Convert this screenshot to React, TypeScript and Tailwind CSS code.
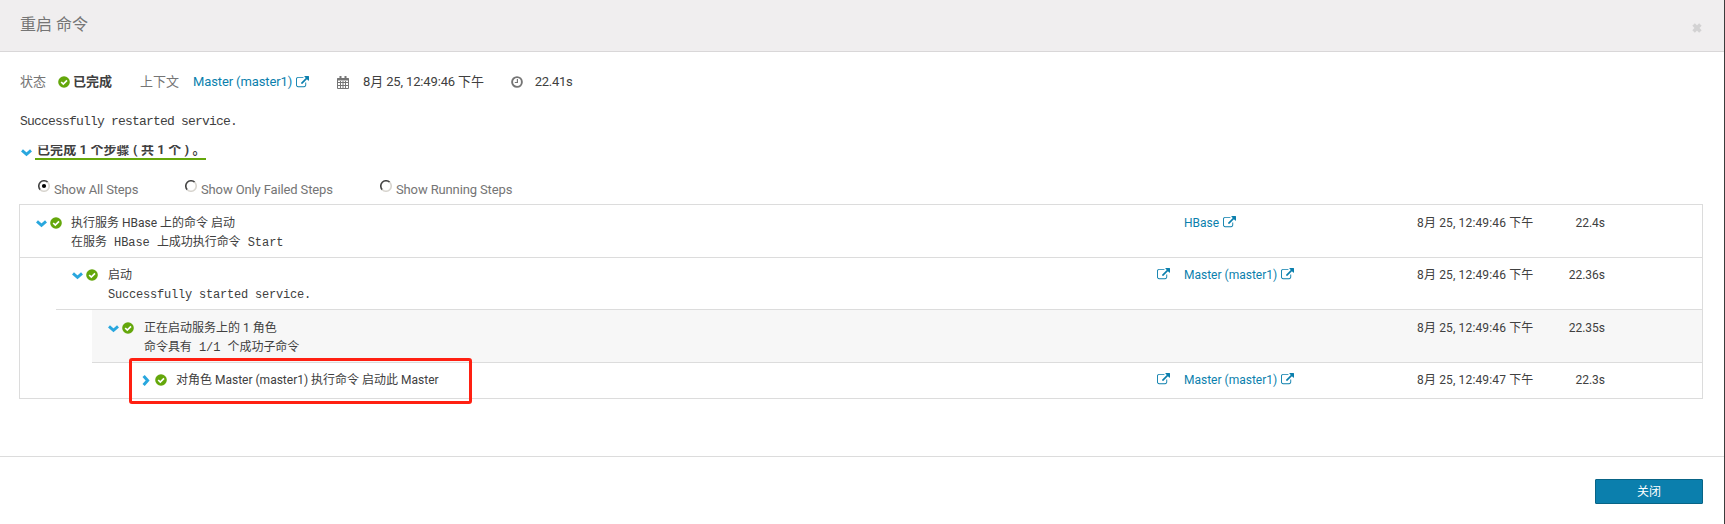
import React from "react";

const sans = "font-[Roboto,'Noto_Sans_CJK_SC',sans-serif]";
const mono = "font-['Liberation_Mono','Noto_Sans_CJK_SC',monospace]";

function Check({ className = "" }: { className?: string }) {
  return (
    <svg viewBox="0 0 12 12" className={`size-3 shrink-0 ${className}`}>
      <circle cx="6" cy="6" r="5.8" fill="#64a70b" />
      <path d="M3.2 6l2.1 2.1L9 4.4" fill="none" stroke="#fff" strokeWidth="1.7" />
    </svg>
  );
}

function Chevron({ open = true, className = "" }: { open?: boolean; className?: string }) {
  return open ? (
    <svg viewBox="0 0 11 8" className={`h-2 w-[11px] shrink-0 ${className}`}>
      <path d="M1 1.4l4.5 4 4.5-4" fill="none" stroke="#29a7de" strokeWidth="2.9" />
    </svg>
  ) : (
    <svg viewBox="0 0 8 11" className={`h-[11px] w-2 shrink-0 ${className}`}>
      <path d="M1.6 1l4 4.5-4 4.5" fill="none" stroke="#29a7de" strokeWidth="3" />
    </svg>
  );
}

function External({ className = "" }: { className?: string }) {
  return (
    <svg viewBox="0 0 1792 1792" className={`size-[13px] shrink-0 ${className}`} fill="#0b7fad">
      <path d="M1408 928v320q0 119-84.5 203.5t-203.5 84.5h-832q-119 0-203.5-84.5t-84.5-203.5v-832q0-119 84.5-203.5t203.5-84.5h704q14 0 23 9t9 23v64q0 14-9 23t-23 9h-704q-66 0-113 47t-47 113v832q0 66 47 113t113 47h832q66 0 113-47t47-113v-320q0-14 9-23t23-9h64q14 0 23 9t9 23zm384-864v512q0 26-19 45t-45 19-45-19l-176-176-652 652q-10 10-23 10t-23-10l-114-114q-10-10-10-23t10-23l652-652-176-176q-19-19-19-45t19-45 45-19h512q26 0 45 19t19 45z" />
    </svg>
  );
}

function Calendar() {
  return (
    <svg viewBox="0 0 12 13" className="ml-7 h-[13px] w-3 shrink-0" fill="none" stroke="#757575">
      <path d="M.5 2.5h11v10H.5zM0 6.5h12M0 9.5h12M3.5 5v8M6 5v8M8.5 5v8" />
      <path d="M0 3.5h12" strokeWidth="2" />
      <path d="M3.5 0v3M8.5 0v3" strokeWidth="2" />
    </svg>
  );
}

function Clock() {
  return (
    <svg viewBox="0 0 12 12" className="ml-[27px] size-3 shrink-0" fill="none" stroke="#757575">
      <circle cx="6" cy="6" r="4.9" strokeWidth="1.9" />
      <path d="M6.4 3v3.5H3.8" strokeWidth="1.2" />
    </svg>
  );
}

function Radio({ label, checked = false, className }: { label: string; checked?: boolean; className: string }) {
  return (
    <label className={`flex shrink-0 items-start ${className}`}>
      <svg viewBox="0 0 12 12" className="mr-1 size-3 shrink-0">
        <path d="M2.3 9.7A5.2 5.2 0 0 1 9.7 2.3" fill="none" stroke="#444" strokeWidth="1.6" />
        <path d="M9.7 2.3A5.2 5.2 0 0 1 2.3 9.7" fill="none" stroke="#d8d5cf" strokeWidth="1.6" />
        {checked && <circle cx="6" cy="6" r="2.1" fill="#000" />}
      </svg>
      <span className="mt-px whitespace-nowrap leading-[18px] tracking-[-0.13px] text-[#757575]">{label}</span>
    </label>
  );
}

type Step = {
  title: string;
  detail?: string;
  link?: string;
  extra?: boolean;
  time: string;
  duration: string;
  open?: boolean;
  row: string;
  gap: string;
  detailSpacing: string;
};

const steps: Step[] = [
  { title: "执行服务 HBase 上的命令 启动", detail: "在服务 HBase 上成功执行命令 Start", link: "HBase", time: "8月 25, 12:49:46 下午", duration: "22.4s", open: true, row: "h-[53px] border-b pt-[9px] pl-4", gap: "ml-[9px]", detailSpacing: "tracking-[-0.05px]" },
  { title: "启动", detail: "Successfully started service.", link: "Master (master1)", extra: true, time: "8月 25, 12:49:46 下午", duration: "22.36s", open: true, row: "ml-9 h-[52px] border-b pt-2 pl-4", gap: "ml-[10px]", detailSpacing: "tracking-[-0.2px]" },
  { title: "正在启动服务上的 1 角色", detail: "命令具有 1/1 个成功子命令", time: "8月 25, 12:49:46 下午", duration: "22.35s", open: true, row: "ml-[72px] h-[53px] border-b bg-[#f7f7f7] pt-[9px] pl-4", gap: "ml-[10px]", detailSpacing: "tracking-[-0.05px]" },
  { title: "对角色 Master (master1) 执行命令 启动此 Master", link: "Master (master1)", extra: true, time: "8月 25, 12:49:47 下午", duration: "22.3s", open: false, row: "ml-[108px] h-[35px] pt-2 pl-[14px]", gap: "ml-[9px]", detailSpacing: "" },
];

function StepRow({ s }: { s: Step }) {
  return (
    <div className={`flex items-start border-[#dcdcdc] text-[12px] leading-[19px] text-[#404040] ${s.row}`}>
      <Chevron open={s.open} className={s.open ? "mt-[6px]" : "mt-[4px] mr-[3px]"} />
      <Check className={s.open ? "mt-[3px] ml-[3px]" : "mt-[3px] ml-0.5"} />
      <div className={`min-w-0 grow whitespace-nowrap ${s.gap}`}>
        <div>{s.title}</div>
        {s.detail && <div className={`pt-px ${s.detailSpacing} ${mono}`}>{s.detail}</div>}
      </div>
      <div className="flex w-[545px] shrink-0">
        <div className="w-[27px] pt-[2px]">{s.extra && <External />}</div>
        <div className="flex w-[232px] gap-1 whitespace-nowrap text-[#0b7fad]">
          {s.link && <><span>{s.link}</span><External className="mt-[2px]" /></>}
        </div>
        <div className="w-[129px] whitespace-nowrap pl-px tracking-[0.15px]">{s.time}</div>
        <div className="w-[60px] text-right">{s.duration}</div>
      </div>
    </div>
  );
}

export default function App() {
  return (
    <div className={`flex h-[524px] w-[1725px] flex-col overflow-hidden border-r border-[#3c3c3c] bg-white text-[13px] text-[#404040] ${sans}`}>
      <header className="flex h-[52px] shrink-0 items-center justify-between border-b border-[#d9d7d8] bg-[#f0eeef] pl-5 pr-[22px]">
        <h1 className="-mt-0.5 text-[16px] leading-6 text-[#757575]">重启 命令</h1>
        <svg viewBox="0 0 10 10" className="mt-1 size-[10px]"><path d="M1.6 1.6l6.8 6.8M8.4 1.6L1.6 8.4" stroke="#d3d2d3" strokeWidth="3.6" /></svg>
      </header>

      <main className="flex h-[405px] shrink-0 flex-col border-b border-[#dcdcdc] pl-[19px]">
        <div className="mt-5 flex h-5 items-center whitespace-nowrap">
          <span className="ml-px text-[#757575]">状态</span>
          <Check className="ml-3" />
          <strong className="ml-[3px] font-bold">已完成</strong>
          <span className="ml-7 text-[#757575]">上下文</span>
          <a className="ml-[14px] tracking-[-0.12px] text-[#0b7fad]">Master (master1)</a>
          <External className="ml-1" />
          <Calendar />
          <span className="ml-[14px] tracking-[-0.14px]">8月 25, 12:49:46 下午</span>
          <Clock />
          <span className="ml-3 tracking-[-0.3px]">22.41s</span>
        </div>
        <div className={`ml-px mt-[20px] h-5 text-[13px] leading-5 tracking-[-0.8px] ${mono}`}>Successfully restarted service.</div>
        <div className="mt-[13px] flex h-[15px]">
          <Chevron className="mt-[4px] ml-[2px]" />
          <div className="ml-[3px] h-[15px] w-[171px] overflow-hidden whitespace-nowrap border-b-2 border-[#64a70b] pl-[2px]">
            <div className="-mt-1 font-bold leading-[17px] tracking-[0.08px]">已完成 1 个步骤 ( 共 1 个 ) 。</div>
          </div>
        </div>
        <div className="mt-[20px] flex h-6">
          <Radio label="Show All Steps" checked className="w-[147px] ml-[19px]" />
          <Radio label="Show Only Failed Steps" className="w-[195px]" />
          <Radio label="Show Running Steps" className="w-[160px]" />
        </div>
        <section className="relative w-[1684px] border border-[#dcdcdc]">
          {steps.map((s) => <StepRow key={s.title} s={s} />)}
          <div className="pointer-events-none absolute left-[109px] top-[153px] h-[46px] w-[343px] rounded-[3px] border-3 border-[#ff2012]" />
        </section>
      </main>

      <footer className="flex justify-end pr-[21px] pt-[22px]">
        <button className="h-[25px] w-[108px] rounded-[1px] border border-[#086486] bg-[#0b7fad] text-[12px] leading-none text-white">关闭</button>
      </footer>
    </div>
  );
}
